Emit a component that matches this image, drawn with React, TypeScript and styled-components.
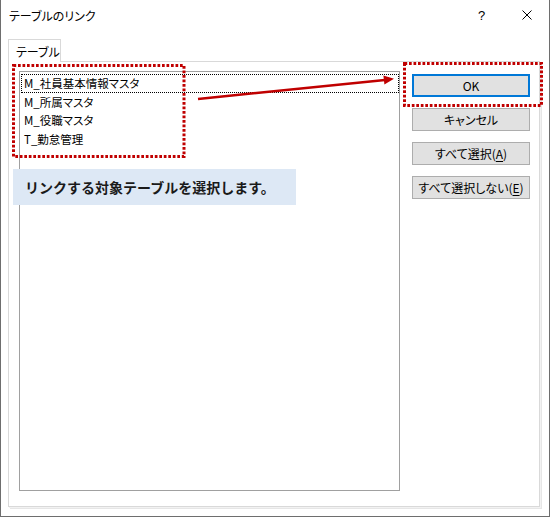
import styled, { createGlobalStyle } from "styled-components";

const GlobalStyle = createGlobalStyle`
    html, body {
        margin: 0;
        padding: 0;
        background: #ffffff;
    }
    body {
        font-family: "Noto Sans CJK JP", "Noto Sans", sans-serif;
        font-size: 12px;
        color: #000;
    }
    * {
        box-sizing: border-box;
    }
`

const tables = ["M_社員基本情報マスタ", "M_所属マスタ", "M_役職マスタ", "T_勤怠管理"];

export default function App() {
    return (
        <>
            <GlobalStyle />
            <Window>
                <TitleBar>
                    <TitleText>テーブルのリンク</TitleText>
                    <CaptionButton>?</CaptionButton>
                    <CaptionButton>
                        <svg width="10" height="10" viewBox="0 0 10 10">
                            <path d="M0.5 0.5 L9.5 9.5 M9.5 0.5 L0.5 9.5" stroke="#000" strokeWidth="1" />
                        </svg>
                    </CaptionButton>
                </TitleBar>

                <Body>
                    <TabStrip>
                        <Tab>テーブル</Tab>
                    </TabStrip>
                    <Panel>
                        <ListBox>
                            {tables.map((name, i) => (
                                <ListRow key={name} $focused={i === 0}>{name}</ListRow>
                            ))}
                        </ListBox>
                        <ButtonColumn>
                            <DialogButton $default>OK</DialogButton>
                            <DialogButton>キャンセル</DialogButton>
                            <DialogButton>すべて選択(<u>A</u>)</DialogButton>
                            <DialogButton>すべて選択しない(<u>E</u>)</DialogButton>
                        </ButtonColumn>
                    </Panel>
                </Body>

                {/* annotations drawn over the dialog */}
                <Callout>リンクする対象テーブルを選択します。</Callout>
                <Markup width="550" height="517" viewBox="0 0 550 517">
                    <rect x="13.5" y="65.5" width="170.5" height="91" fill="none" stroke="#c00000" strokeWidth="3" strokeDasharray="2.7 1.8" />
                    <rect x="404.5" y="63.5" width="137" height="42" fill="none" stroke="#c00000" strokeWidth="3" strokeDasharray="2.7 1.8" />
                    <line x1="198" y1="99" x2="385" y2="80" stroke="#c00000" strokeWidth="2.5" />
                    <polygon points="394,78.8 383.4,75.4 384.4,84.4" fill="#c00000" />
                </Markup>
            </Window>
        </>
    )
}

const Window = styled.div`
    position: relative;
    width: 550px;
    height: 517px;
    display: flex;
    flex-direction: column;
    background: #ffffff;
    border: 1px solid #6e6e6e;
    border-top: none;
`

const TitleBar = styled.div`
    height: 30px;
    display: flex;
    align-items: stretch;
`

const TitleText = styled.div`
    display: flex;
    align-items: center;
    padding-left: 8px;
    font-size: 12px;
    font-feature-settings: "palt";
    flex: 1;
`

const CaptionButton = styled.div`
    width: 45px;
    display: flex;
    align-items: center;
    justify-content: center;
    font-size: 13px;
    font-family: "Liberation Sans", sans-serif;
`

const Body = styled.div`
    flex: 1;
    display: flex;
    flex-direction: column;
    padding: 9px 9px 9px 7px;
`

const TabStrip = styled.div`
    display: flex;
    height: 22px;
`

const Tab = styled.div`
    position: relative;
    z-index: 1;
    width: 53px;
    height: 23px;
    padding-left: 7px;
    display: flex;
    align-items: center;
    background: #ffffff;
    border: 1px solid #d9d9d9;
    border-bottom: none;
    font-feature-settings: "palt";
`

const Panel = styled.div`
    flex: 1;
    display: flex;
    align-items: flex-start;
    padding: 9px 9px 15px 10px;
    border: 1px solid #d9d9d9;
    box-shadow: 1px 1px 0 #f2f2f2, 2px 2px 0 #e6e6e6;
`

const ListBox = styled.div`
    width: 381px;
    align-self: stretch;
    border: 1px solid #a0a0a0;
    padding: 2px 0 0 1px;
    display: flex;
    flex-direction: column;
`

const ListRow = styled.div<{ $focused?: boolean }>`
    height: 18.5px;
    padding-left: 2px;
    display: flex;
    align-items: center;
    border: 1px ${({ $focused }) => $focused ? "dotted #000" : "solid transparent"};
    font-size: 11.5px;
    font-feature-settings: "palt";
    white-space: nowrap;
`

const ButtonColumn = styled.div`
    width: 118px;
    margin-left: 12px;
    padding-top: 3px;
    display: flex;
    flex-direction: column;
    gap: 11px;
`

const DialogButton = styled.div<{ $default?: boolean }>`
    height: 23px;
    display: flex;
    align-items: center;
    justify-content: center;
    background: #e1e1e1;
    border: ${({ $default }) => $default ? "2px solid #0078d7" : "1px solid #adadad"};
    font-feature-settings: "palt";
    white-space: nowrap;

    u {
        text-decoration-thickness: 1px;
        text-underline-offset: 2px;
    }
`

const Callout = styled.div`
    position: absolute;
    left: 12px;
    top: 169px;
    width: 283px;
    height: 36px;
    padding-left: 12px;
    display: flex;
    align-items: center;
    background: #dde8f5;
    color: #1a1a1a;
    font-size: 14px;
    font-weight: 700;
    white-space: nowrap;
`

const Markup = styled.svg`
    position: absolute;
    left: -1px;
    top: 0;
    pointer-events: none;
`
